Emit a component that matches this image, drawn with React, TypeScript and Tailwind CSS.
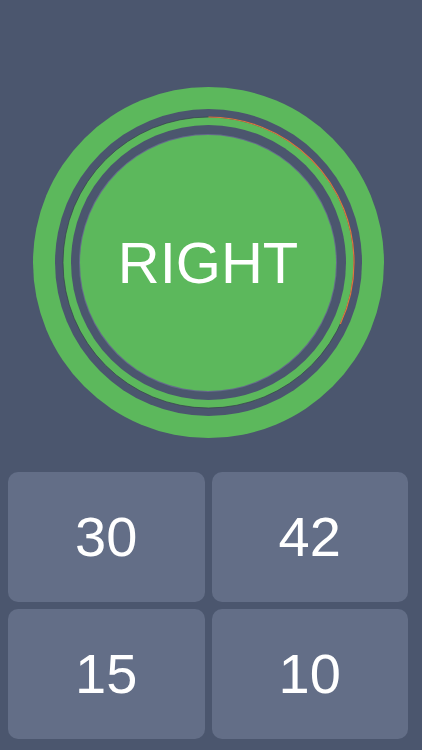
import React from 'react';

const answers = ['30', '42', '15', '10'];

function Timer() {
  // thin progress line between the rings
  const r = 145.5;
  const c = 2 * Math.PI * r;
  const done = (c * 115) / 360;

  return (
    <div className="relative w-[351px] h-[351px] rounded-full bg-[#5cb85c] flex items-center justify-center">
      <div className="w-[307px] h-[307px] rounded-full bg-[#4b566e] flex items-center justify-center">
        <div className="w-[291px] h-[291px] rounded-full bg-[#5cb85c] flex items-center justify-center">
          <div className="w-[275px] h-[275px] rounded-full bg-[#4b566e] flex items-center justify-center">
            <div className="w-[256px] h-[256px] rounded-full bg-[#5cb85c] ring-1 ring-[#656a8c] flex items-center justify-center">
              <span className="text-white text-[58px] leading-none tracking-normal">RIGHT</span>
            </div>
          </div>
        </div>
      </div>
      <svg className="absolute inset-0 pointer-events-none" width="351" height="351" viewBox="0 0 351 351">
        <g transform="rotate(-90 175.5 175.5)">
          <circle cx="175.5" cy="175.5" r={r} fill="none" stroke="#36404a" strokeWidth="1" strokeOpacity="0.7" />
          <circle
            cx="175.5"
            cy="175.5"
            r={r}
            fill="none"
            stroke="#e0743f"
            strokeWidth="1.2"
            strokeDasharray={`${done} ${c}`}
          />
        </g>
      </svg>
    </div>
  );
}

export default function App() {
  return (
    <div className="min-h-screen bg-[#4b566e] pl-2 pr-[14px] pt-[87px] font-['Liberation_Sans',Arial,sans-serif]">
      <div className="flex justify-center">
        <Timer />
      </div>

      <div className="mt-[34px] grid grid-cols-2 gap-[7px]">
        {answers.map((a) => (
          <button
            key={a}
            className="h-[130px] rounded-[10px] bg-[#636e87] text-white text-[56px] leading-none flex items-center justify-center"
          >
            {a}
          </button>
        ))}
      </div>
    </div>
  );
}
